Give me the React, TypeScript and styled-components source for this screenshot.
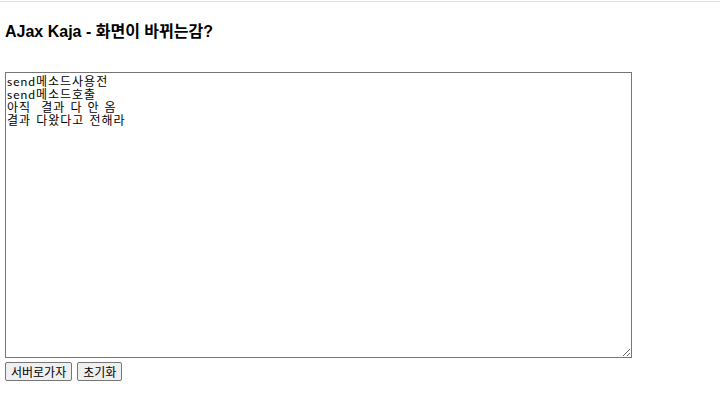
import styled, { createGlobalStyle } from 'styled-components';

const GlobalStyle = createGlobalStyle`
  body {
    margin: 0;
    background: #fff;
    font-family: "Liberation Sans", "Noto Sans CJK KR", sans-serif;
  }
`;

const Page = styled.div`
  border-top: 1px solid #dedede;
  margin-top: 1px;
  padding: 0 5px;
`;

const Title = styled.h3`
  margin: 18px 0 0;
  height: 24px;
  line-height: 24px;
  font-size: 16px;
  font-weight: 700;
  color: #000;
`;

const Output = styled.textarea`
  display: block;
  box-sizing: border-box;
  margin-top: 28px;
  width: 627px;
  height: 286px;
  padding: 2px 1px;
  border: 1px solid #767676;
  font-family: Lato, "Noto Sans CJK KR", monospace;
  font-size: 12px;
  line-height: 13px;
  letter-spacing: 1px;
  word-spacing: 1px;
  color: #000;
  resize: both;
  outline: none;
`;

const Buttons = styled.div`
  display: flex;
  gap: 5px;
  margin-top: 4px;
`;

const Button = styled.button`
  height: 19px;
  padding: 0 5px;
  border: 1px solid #767676;
  border-radius: 2px;
  background: #efefef;
  font-family: "Noto Sans CJK KR", sans-serif;
  font-size: 12px;
  line-height: 15px;
  color: #000;
`;

const log = ['send메소드사용전', 'send메소드호출', '아직  결과 다 안 옴', '결과 다왔다고 전해라'];

export default function App() {
  return (
    <>
      <GlobalStyle />
      <Page>
        <Title>AJax Kaja - 화면이 바뀌는감?</Title>
        <Output readOnly value={log.join('\n')} />
        <Buttons>
          <Button>서버로가자</Button>
          <Button>초기화</Button>
        </Buttons>
      </Page>
    </>
  );
}
